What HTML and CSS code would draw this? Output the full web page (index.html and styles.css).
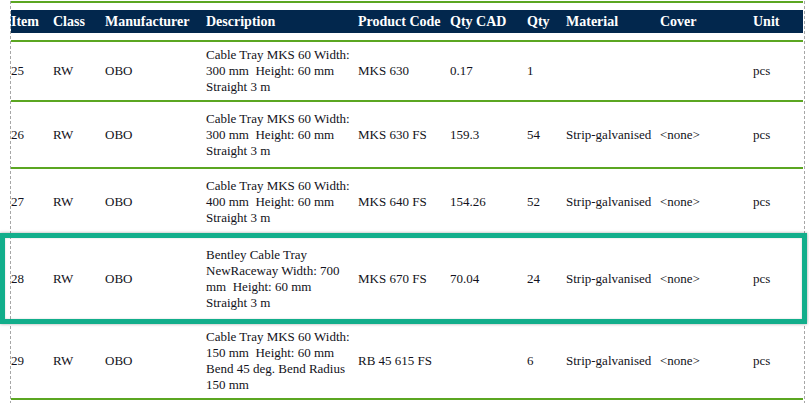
FILE: index.html
```html
<!DOCTYPE html>
<html>
<head>
<meta charset="utf-8">
<link rel="stylesheet" href="styles.css">
</head>
<body>
<div class="sheet">
  <div class="report">
    <table class="bom">
      <colgroup>
        <col class="c-item"><col class="c-class"><col class="c-man"><col class="c-desc"><col class="c-code">
        <col class="c-qcad"><col class="c-qty"><col class="c-mat"><col class="c-cover"><col class="c-unit">
      </colgroup>
      <thead>
        <tr>
          <th>Item</th><th>Class</th><th>Manufacturer</th><th>Description</th><th>Product Code</th>
          <th>Qty CAD</th><th>Qty</th><th>Material</th><th>Cover</th><th>Unit</th>
        </tr>
      </thead>
      <tbody>
        <tr class="row-first">
          <td>25</td><td>RW</td><td>OBO</td>
          <td>Cable Tray MKS 60 Width:<br>300 mm&nbsp; Height: 60 mm<br>Straight 3 m</td>
          <td>MKS 630</td><td>0.17</td><td>1</td><td></td><td></td><td>pcs</td>
        </tr>
        <tr class="row-mid">
          <td>26</td><td>RW</td><td>OBO</td>
          <td>Cable Tray MKS 60 Width:<br>300 mm&nbsp; Height: 60 mm<br>Straight 3 m</td>
          <td>MKS 630 FS</td><td>159.3</td><td>54</td><td>Strip-galvanised</td><td>&lt;none&gt;</td><td>pcs</td>
        </tr>
        <tr class="row-mid2">
          <td>27</td><td>RW</td><td>OBO</td>
          <td>Cable Tray MKS 60 Width:<br>400 mm&nbsp; Height: 60 mm<br>Straight 3 m</td>
          <td>MKS 640 FS</td><td>154.26</td><td>52</td><td>Strip-galvanised</td><td>&lt;none&gt;</td><td>pcs</td>
        </tr>
        <tr class="row-hl">
          <td>28</td><td>RW</td><td>OBO</td>
          <td>Bentley Cable Tray<br>NewRaceway Width: 700<br>mm&nbsp; Height: 60 mm<br>Straight 3 m</td>
          <td>MKS 670 FS</td><td>70.04</td><td>24</td><td>Strip-galvanised</td><td>&lt;none&gt;</td><td>pcs</td>
        </tr>
        <tr class="row-last">
          <td>29</td><td>RW</td><td>OBO</td>
          <td>Cable Tray MKS 60 Width:<br>150 mm&nbsp; Height: 60 mm<br>Bend 45 deg. Bend Radius<br>150 mm</td>
          <td>RB 45 615 FS</td><td></td><td>6</td><td>Strip-galvanised</td><td>&lt;none&gt;</td><td>pcs</td>
        </tr>
      </tbody>
    </table>
  </div>
</div>
<div class="highlight"></div>
</body>
</html>
```

FILE: styles.css
```css
html, body {
  margin: 0;
  padding: 0;
  background: #ffffff;
}

body {
  font-family: "Liberation Serif", "Times New Roman", serif;
  color: #121220;
  position: relative;
  width: 809px;
  height: 403px;
  overflow: hidden;
}

.sheet {
  margin-left: 10px;
  width: 793px;
  min-height: 403px;
  border-left: 1px dashed #a6a6a6;
  border-right: 1px dashed #a6a6a6;
}

.report {
  margin-top: 1px;
  border-top: 2px solid #5ba621;
  padding-top: 7px;
  width: 792px;
}

.bom {
  width: 792px;
  table-layout: fixed;
  border-collapse: separate;
  border-spacing: 0;
}

.c-item { width: 42px; }
.c-class { width: 52px; }
.c-man { width: 101px; }
.c-desc { width: 152px; }
.c-code { width: 92px; }
.c-qcad { width: 77px; }
.c-qty { width: 39px; }
.c-mat { width: 94px; }
.c-cover { width: 93px; }
.c-unit { width: 50px; }

.bom th {
  background: #02274d;
  background-clip: padding-box;
  color: #ffffff;
  font-weight: bold;
  font-size: 14px;
  line-height: 23px;
  height: 23px;
  padding: 0;
  text-align: left;
  white-space: nowrap;
  border-bottom: 7px solid #ffffff;
}

.bom td {
  font-size: 13px;
  line-height: 16px;
  padding: 8px 0;
  vertical-align: middle;
  text-align: left;
  border-bottom: 2px solid #5ba621;
  white-space: nowrap;
}

.row-first td {
  border-top: 2px solid #5ba621;
  padding-top: 5px;
  padding-bottom: 5px;
}

.row-mid td {
  padding-top: 8.5px;
  padding-bottom: 8.5px;
}

.row-mid2 td {
  padding-top: 9px;
  padding-bottom: 9px;
}

.row-hl td {
  padding-top: 10px;
  padding-bottom: 10px;
}

.row-last td {
  padding-top: 5.5px;
  padding-bottom: 5.5px;
}

.highlight {
  position: absolute;
  left: 0;
  top: 233px;
  width: 797px;
  height: 81px;
  border: 5px solid #12ae8b;
  box-shadow: 0 0 3px rgba(0, 0, 0, 0.35), inset 0 0 2px rgba(0, 0, 0, 0.2);
  pointer-events: none;
}
```
